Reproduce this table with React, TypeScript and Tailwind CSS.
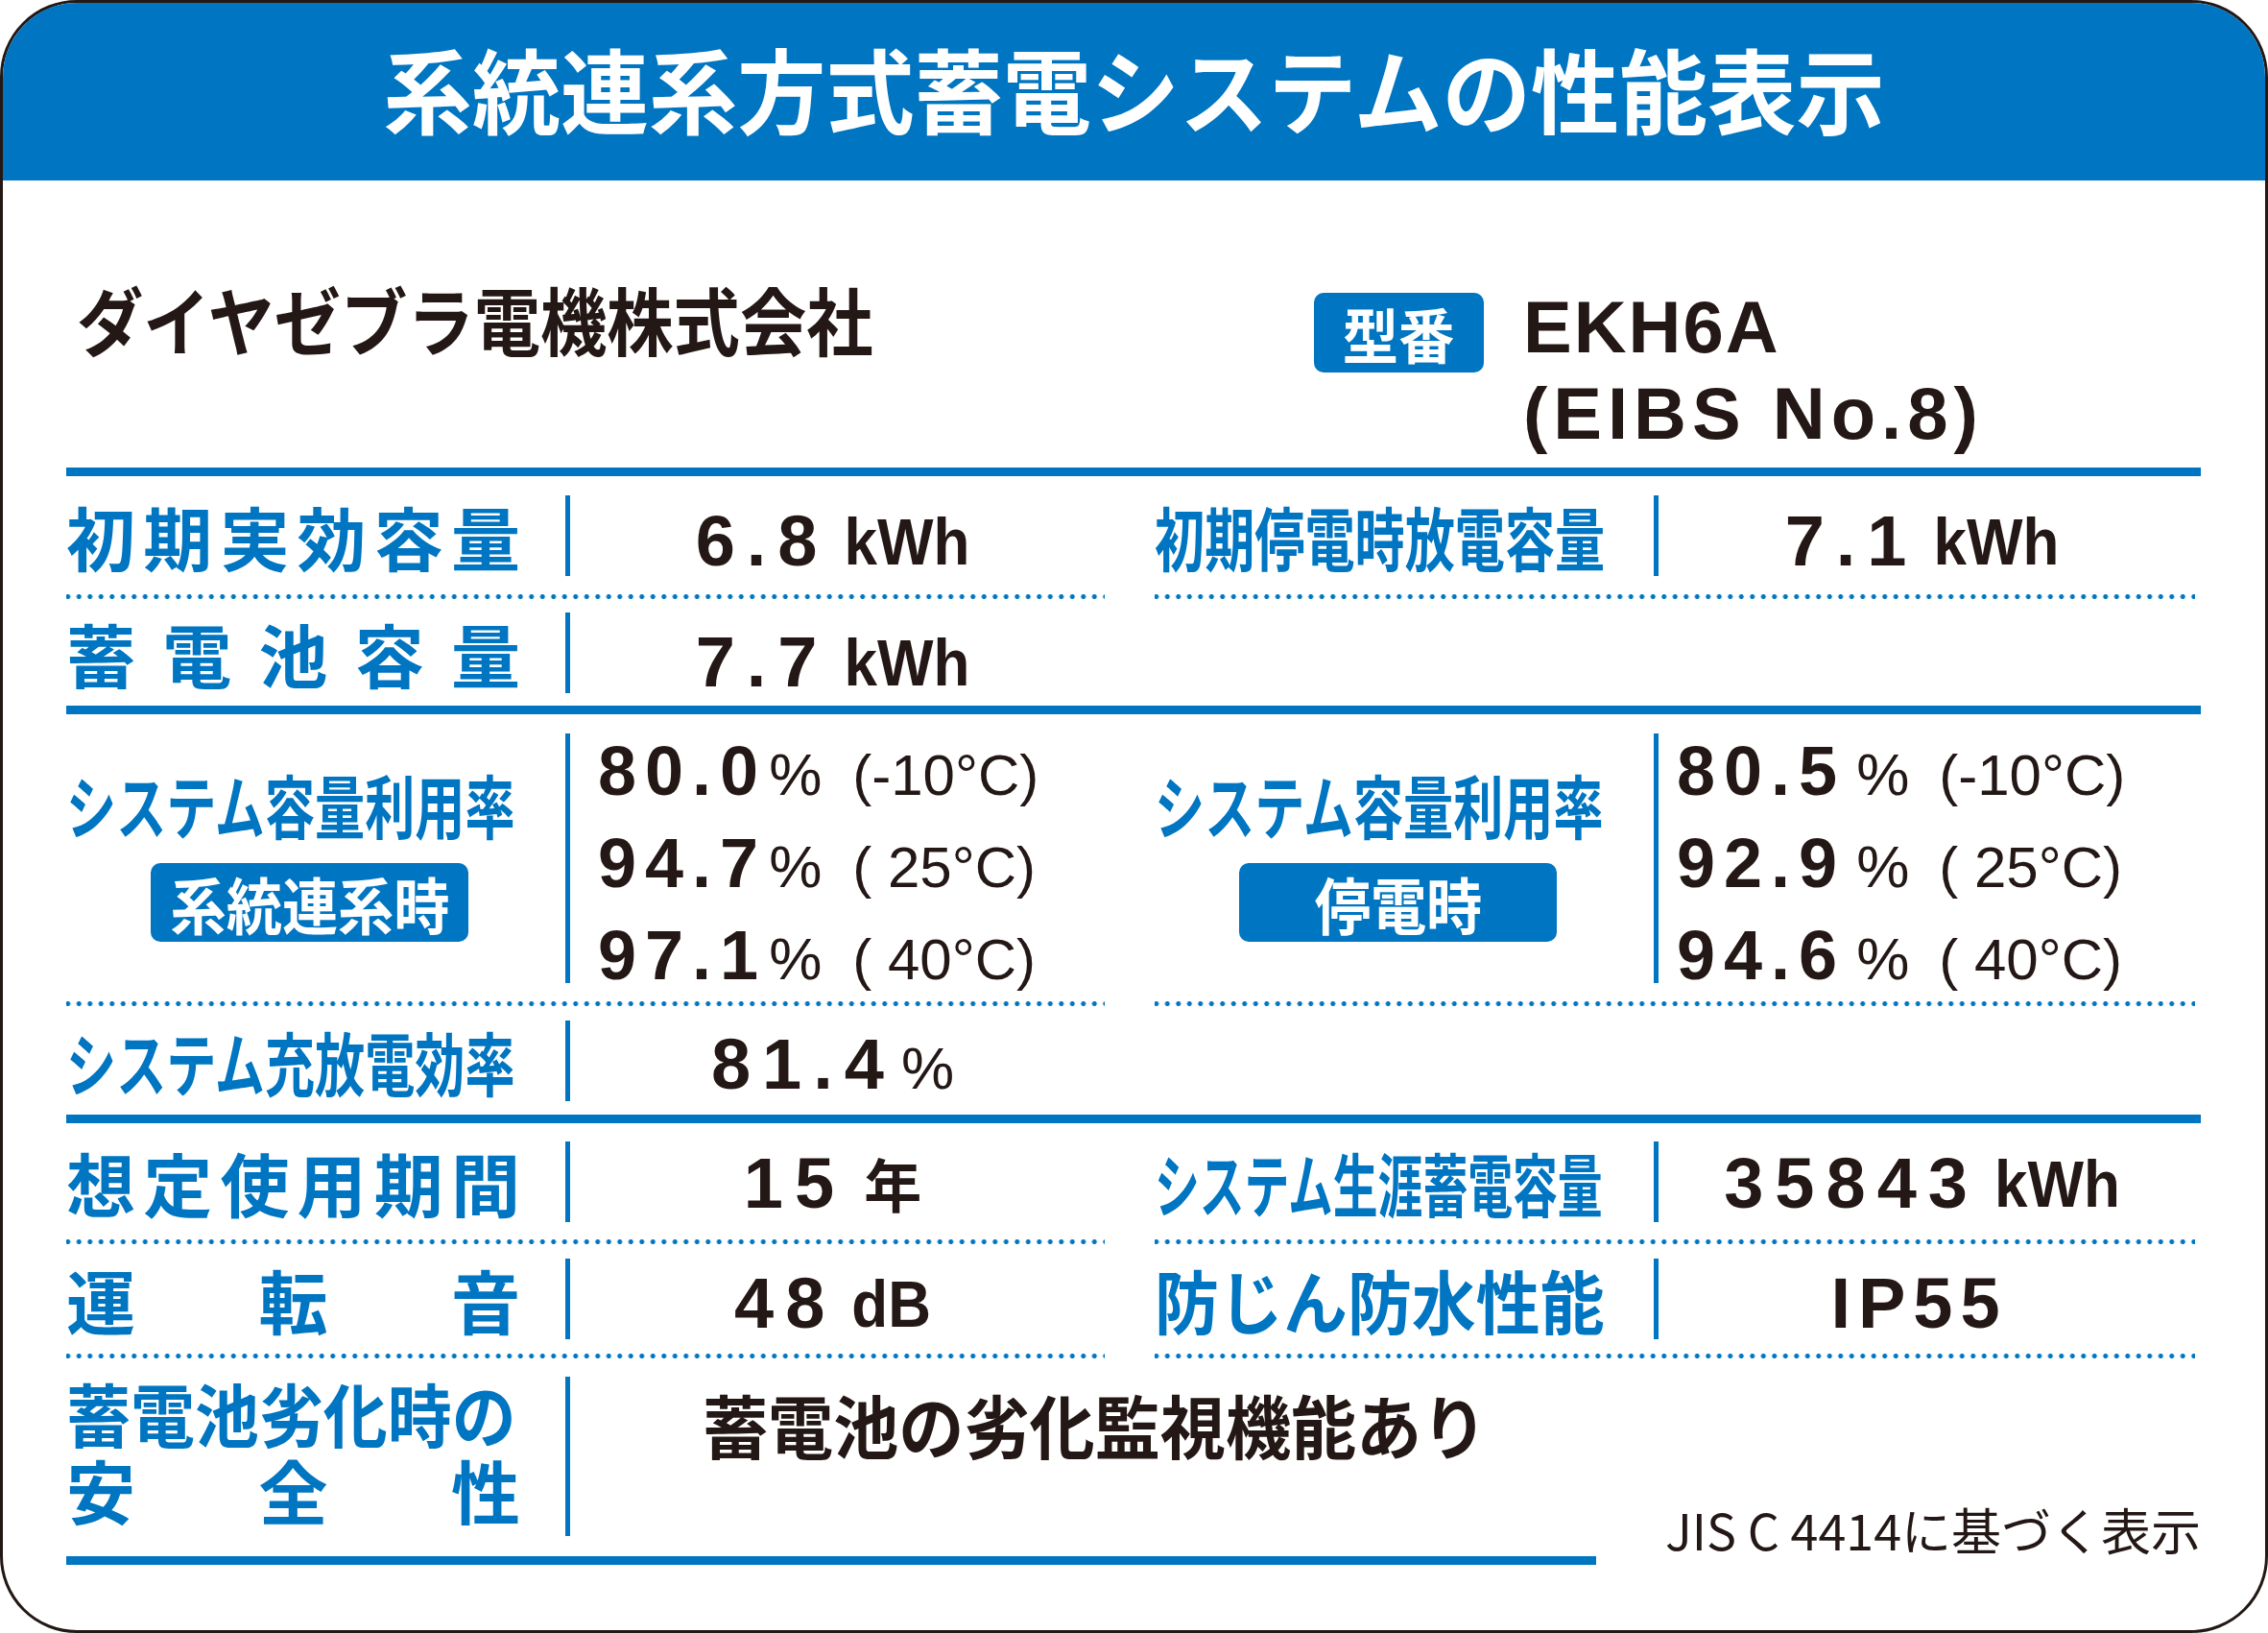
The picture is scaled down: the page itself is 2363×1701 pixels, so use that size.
import type { ReactNode } from 'react'

const jp = "font-['Noto_Sans_CJK_JP',sans-serif]"
const en = "font-['Liberation_Sans','Noto_Sans_CJK_JP',sans-serif]"
const dot =
  'h-[5px] bg-[radial-gradient(circle,#0075c1_2.2px,transparent_2.8px)] bg-[length:11.5px_5px] bg-[position:-4px_0] bg-repeat-x'

function Thick() {
  return <div className="h-[9px] bg-[#0075c1]" />
}

function Dots() {
  return (
    <div className="grid grid-cols-[1082px_1084px] gap-x-[52px]">
      <div className={dot} />
      <div className={dot} />
    </div>
  )
}

// 文字を均等に並べるラベル
function Spaced({ text }: { text: string }) {
  return (
    <div className={`${jp} flex w-[473px] justify-between text-[72px] font-bold leading-none text-[#0075c1]`}>
      {text.split('').map((c, i) => (
        <span key={i}>{c}</span>
      ))}
    </div>
  )
}

// 長体をかけたラベル
function Narrow({ text, scale }: { text: string; scale: string }) {
  return (
    <div className={`${jp} w-[473px] text-[72px] font-bold leading-none text-[#0075c1]`}>
      <span className={`inline-block origin-left whitespace-nowrap ${scale}`}>{text}</span>
    </div>
  )
}

function Cell({ label, value }: { label?: ReactNode; value?: ReactNode }) {
  if (!label) return <div />
  return (
    <div className="flex items-center">
      <div className="w-[520px] shrink-0">{label}</div>
      <div className="h-[84px] w-[5px] shrink-0 bg-[#0075c1]" />
      <div className="flex flex-1 justify-center pr-[10px]">{value}</div>
    </div>
  )
}

function Val({
  num,
  unit,
  kind,
  shift,
}: {
  num: string
  unit: string
  kind: 'en' | 'jp' | 'pct'
  shift: string
}) {
  return (
    <div className={`${en} flex items-baseline whitespace-nowrap leading-none text-[#231815] ${shift}`}>
      <span className={num === 'IP55' ? 'text-[74px] font-bold tracking-[8px]' : 'text-[74px] font-bold tracking-[12px]'}>
        {num}
      </span>
      {kind === 'en' && (
        <span className="ml-[16px] inline-block origin-bottom scale-y-[1.12] text-[62px] font-bold">{unit}</span>
      )}
      {kind === 'jp' && <span className={`${jp} ml-[19px] text-[60px] font-bold`}>{unit}</span>}
      {kind === 'pct' && <span className="ml-[6px] text-[62px]">{unit}</span>}
    </div>
  )
}

function Rates({ rows, right }: { rows: [string, string][]; right?: boolean }) {
  return (
    <div
      className={`${en} self-start pt-[11px] text-[72px] leading-[96px] text-[#231815] ${right ? 'pl-[19px]' : 'pl-[29px]'}`}
    >
      {rows.map(([n, t]) => (
        <div key={n} className="whitespace-pre">
          <span className="font-bold leading-none tracking-[9px]">{n}</span>
          <span className={`text-[62px] leading-none ${right ? 'ml-[11px]' : 'ml-[2px]'}`}>%</span>
          <span className={`text-[60px] leading-none ${right ? 'ml-[31px]' : 'ml-[32px]'}`}>{t}</span>
        </div>
      ))}
    </div>
  )
}

function RateCell({ badge, rows, right }: { badge: string; rows: [string, string][]; right?: boolean }) {
  return (
    <div className="flex items-start">
      <div className="w-[520px] shrink-0 pt-[57px]">
        <Narrow text="システム容量利用率" scale="scale-x-[0.724]" />
        <div className="ml-[88px] mt-[26px] flex h-[82px] w-[331px] items-center justify-center rounded-[10px] bg-[#0075c1]">
          <span className={`${jp} inline-block scale-x-[0.91] whitespace-nowrap text-[64px] font-bold leading-none text-white`}>
            {badge}
          </span>
        </div>
      </div>
      <div className="mt-[20px] h-[260px] w-[5px] shrink-0 bg-[#0075c1]" />
      <Rates rows={rows} right={right} />
    </div>
  )
}

export default function App() {
  return (
    <div className="h-[1701px] w-[2363px] bg-white">
      <div className="h-[1701px] w-[2363px] overflow-hidden rounded-[80px] border-[3px] border-[#231815] bg-white">
        {/* タイトル */}
        <div className="flex h-[185px] items-center justify-center bg-[#0075c1] pb-[10px]">
          <span className={`${jp} inline-block scale-x-[0.96] whitespace-nowrap text-[96px] font-bold leading-none text-white`}>
            系統連系方式蓄電システムの性能表示
          </span>
        </div>

        {/* メーカー・型番 */}
        <div className="flex h-[299px] items-start pl-[77px] pt-[105px]">
          <div className="w-[1289px] shrink-0">
            <span className={`${jp} inline-block origin-left scale-x-[0.9] whitespace-nowrap text-[77px] font-bold leading-none text-[#231815]`}>
              ダイヤゼブラ電機株式会社
            </span>
          </div>
          <div className="mt-[12px] flex h-[83px] w-[177px] shrink-0 items-center justify-center rounded-[10px] bg-[#0075c1]">
            <span className={`${jp} inline-block scale-x-[0.94] text-[62px] font-bold leading-none text-white`}>型番</span>
          </div>
          <div className={`${en} ml-[41px] mt-[3px] whitespace-nowrap text-[76px] font-bold leading-[90px] text-[#231815]`}>
            <div className="tracking-[2px]">EKH6A</div>
            <div className="tracking-[6px]">(EIBS No.8)</div>
          </div>
        </div>

        {/* 表 */}
        <div className="pl-[66px] pr-[67px]">
          <Thick />
          <div className="grid h-[123px] grid-cols-[1082px_1084px] gap-x-[52px]">
            <Cell
              label={<Spaced text="初期実効容量" />}
              value={<Val num="6.8" unit="kWh" kind="en" shift="translate-y-[6px]" />}
            />
            <Cell
              label={<Narrow text="初期停電時放電容量" scale="scale-x-[0.724]" />}
              value={<Val num="7.1" unit="kWh" kind="en" shift="translate-y-[6px]" />}
            />
          </div>
          <Dots />
          <div className="grid h-[111px] grid-cols-[1082px_1084px] gap-x-[52px]">
            <Cell
              label={<Spaced text="蓄電池容量" />}
              value={<Val num="7.7" unit="kWh" kind="en" shift="translate-y-[10px]" />}
            />
            <Cell />
          </div>
          <Thick />
          <div className="grid h-[299px] grid-cols-[1082px_1084px] gap-x-[52px]">
            <RateCell
              badge="系統連系時"
              rows={[
                ['80.0', '(-10°C)'],
                ['94.7', '( 25°C)'],
                ['97.1', '( 40°C)'],
              ]}
            />
            <RateCell
              badge="停電時"
              right
              rows={[
                ['80.5', '(-10°C)'],
                ['92.9', '( 25°C)'],
                ['94.6', '( 40°C)'],
              ]}
            />
          </div>
          <Dots />
          <div className="grid h-[113px] grid-cols-[1082px_1084px] gap-x-[52px]">
            <Cell
              label={<Narrow text="システム充放電効率" scale="scale-x-[0.724]" />}
              value={<Val num="81.4" unit="%" kind="pct" shift="translate-y-[4px]" />}
            />
            <Cell />
          </div>
          <Thick />
          <div className="grid h-[121px] grid-cols-[1082px_1084px] gap-x-[52px]">
            <Cell
              label={<Spaced text="想定使用期間" />}
              value={<Val num="15" unit="年" kind="jp" shift="translate-y-[2px]" />}
            />
            <Cell
              label={<Narrow text="システム生涯蓄電容量" scale="scale-x-[0.65]" />}
              value={<Val num="35843" unit="kWh" kind="en" shift="translate-y-[2px]" />}
            />
          </div>
          <Dots />
          <div className="grid h-[114px] grid-cols-[1082px_1084px] gap-x-[52px]">
            <Cell
              label={<Spaced text="運転音" />}
              value={<Val num="48" unit="dB" kind="en" shift="translate-y-[5px]" />}
            />
            <Cell
              label={<Narrow text="防じん防水性能" scale="scale-x-[0.93]" />}
              value={<Val num="IP55" unit="" kind="pct" shift="translate-y-[5px]" />}
            />
          </div>
          <Dots />
          <div className="flex h-[206px]">
            <div className={`${jp} w-[520px] shrink-0 pt-[20px] text-[72px] font-bold leading-none text-[#0075c1]`}>
              <div className="whitespace-nowrap">
                <span className="inline-block origin-left scale-x-[0.93]">蓄電池劣化時の</span>
              </div>
              <div className="mt-[8px] flex w-[473px] justify-between">
                <span>安</span>
                <span>全</span>
                <span>性</span>
              </div>
            </div>
            <div className="mt-[19px] h-[166px] w-[5px] shrink-0 bg-[#0075c1]" />
            <div className="ml-[138px] mt-[32px] shrink-0">
              <span className={`${jp} inline-block origin-left scale-x-[0.946] whitespace-nowrap text-[72px] font-bold leading-none text-[#231815]`}>
                蓄電池の劣化監視機能あり
              </span>
            </div>
            <div className="ml-auto shrink-0 self-end">
              <span className={`${jp} inline-block whitespace-nowrap text-[52px] font-normal leading-none text-[#231815]`}>
                JIS C 4414に基づく表示
              </span>
            </div>
          </div>
          <div className="h-[9px] w-[1594px] bg-[#0075c1]" />
        </div>
      </div>
    </div>
  )
}
